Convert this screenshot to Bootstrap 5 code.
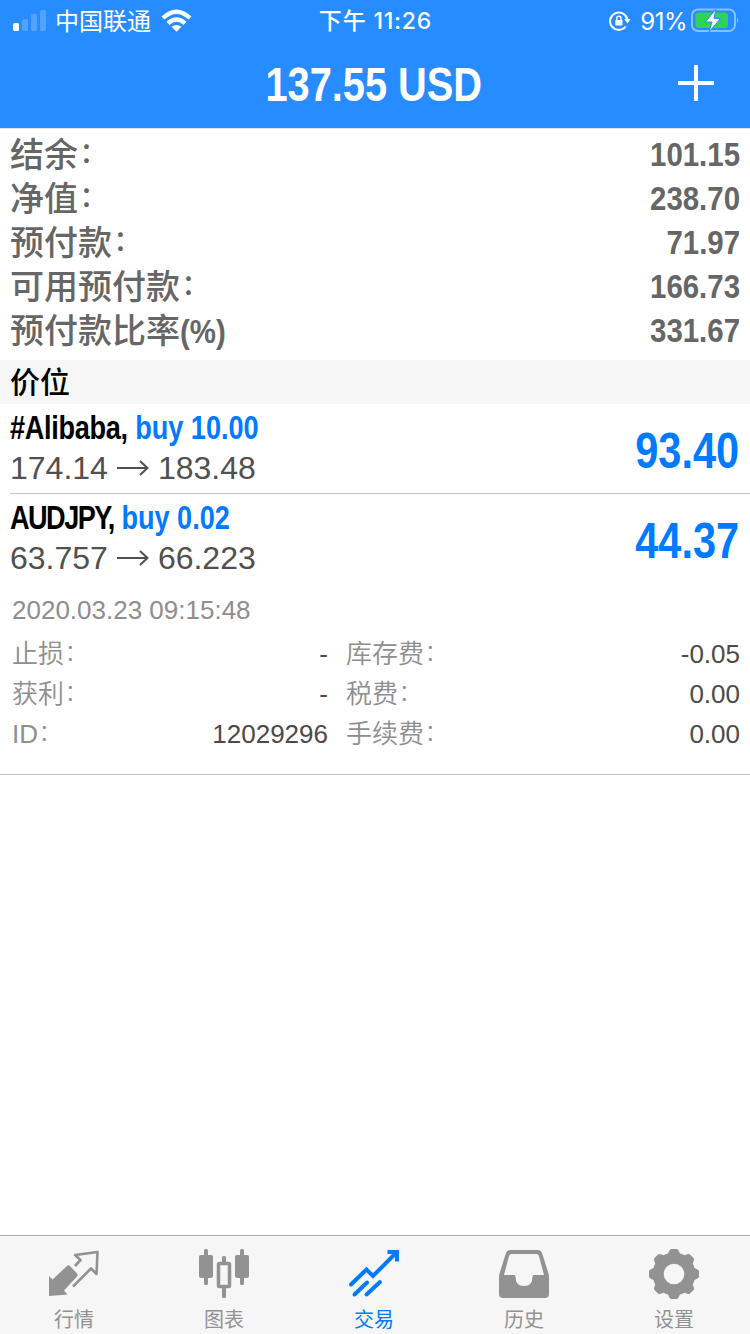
<!DOCTYPE html>
<html lang="zh-CN">
<head>
    <meta charset="UTF-8">
    <meta name="viewport" content="width=device-width, initial-scale=1.0">
    <title>交易</title>
    <link rel="stylesheet" href="https://cdn.jsdelivr.net/npm/bootstrap@5.3.0/dist/css/bootstrap.min.css">
    <style>
        body { font-family: "Liberation Sans", "Noto Sans CJK SC", sans-serif; color: #000; }
        svg { display: block; flex: none; }
        /* condensed bold: Arial widths squeezed horizontally */
        .cond { display: inline-block; font-weight: 700; white-space: nowrap; transform: scaleX(.865); transform-origin: right center; }
        .cond.from-left { transform-origin: left center; }
        /* slightly smaller colon, raised to the middle of the characters */
        .colon { font-size: .82em; line-height: 1; vertical-align: .14em; margin-left: .05em; }
        .topbar { height: 128px; background: #278cff; color: #fff; }
        .status { height: 41px; font-family: Inter, "Noto Sans CJK SC", sans-serif; font-size: 24px; line-height: 41px; padding: 0 11px 0 12px; }
        .status > div { flex: 1 1 0; }
        .carrier { margin-left: 8px; padding-top: 1px; }
        .wifi { margin-left: 10px; }
        .clock { font-weight: 500; font-size: 23px; letter-spacing: .8px; padding-top: 1px; }
        .pct { letter-spacing: -.5px; padding-top: 1px; margin: 0 4px 0 9px; }
        .title-row { height: 87px; padding: 0 36px; }
        .plus { margin-bottom: 3px; }
        .cond.total { font-size: 48px; line-height: 87px; transform: translateX(-1px) scaleX(.828); transform-origin: center; }
        .summary { height: 232px; padding: 4px 10px 0; color: #666; border-top: 1px solid #e4e4e4; }
        .sum-line { height: 44px; font-size: 34px; line-height: 44px; }
        .sum-line > .cond { line-height: 42px; }
        .sum-label { font-weight: 500; }
        .section-head { height: 44px; line-height: 46px; padding: 0 10px; font-size: 30px; font-weight: 500; background: #f6f6f6; }
        .position { height: 90px; padding-right: 11px; margin-left: 10px; }
        .position.ruled { border-bottom: 1px solid #c4c4c6; }
        .cond.symbol { display: block; font-size: 34px; line-height: 40px; padding: 3px 0 1px; transform: scaleX(.797); }
        .name-mixed { letter-spacing: -.4px; }
        .name-caps { letter-spacing: -1.9px; }
        .blue { color: #007aff; }
        .prices { font-size: 32px; line-height: 40px; color: #505050; }
        .cond.profit { font-size: 50px; line-height: 90px; padding-top: 2px; transform: scaleX(.83); }
        .details { height: 191px; border-bottom: 1px solid #c4c4c6; color: #8e8e8e; font-size: 26px; }
        .stamp { line-height: 40px; padding: 6px 12px 4px; }
        .detail-line { height: 40px; line-height: 40px; padding: 0 10px 0 12px; }
        .cell-left { width: 316px; margin-right: 18px; }
        .details .num { color: #4a4a4a; }
        .cjk { font-weight: 350; }
        .tabs { height: 99px; background: #f6f6f6; border-top: 1px solid #acacac; color: #929292; font-size: 20px; }
        .tab-item { width: 150px; padding: 13px 2px 0 0; line-height: 30px; }
        .tab-item svg { margin-bottom: 6px; }
    </style>
</head>
<body class="bg-white">
    <div class="d-flex flex-column vh-100 overflow-hidden">
        <header class="topbar">
            <div class="status d-flex">
                <div class="d-flex align-items-center">
                    <svg width="35" height="22" viewBox="0 0 35 22" fill="#fff">
                        <rect x="1" y="13" width="6" height="8" rx="1.5"/>
                        <g opacity=".2">
                            <rect x="10" y="9" width="6" height="12" rx="1.5"/>
                            <rect x="19" y="4" width="6" height="17" rx="1.5"/>
                            <rect x="28" y="0" width="6" height="21" rx="1.5"/>
                        </g>
                    </svg>
                    <span class="carrier">中国联通</span>
                    <svg class="wifi" width="31" height="23" viewBox="0 0 31 23">
                        <g fill="none" stroke="#fff" stroke-width="4.400">
                            <path d="M2 9Q15.500-3.500 29 9"/>
                            <path d="M7 14.300Q15.500 6.700 24 14.300"/>
                        </g>
                        <path d="M10.500 17.800q5-3.800 10 0L15.500 22.800z" fill="#fff"/>
                    </svg>
                </div>
                <div class="clock text-center">下午 11:26</div>
                <div class="d-flex align-items-center justify-content-end">
                    <svg width="22" height="22" viewBox="0 0 22 22">
                        <path d="M18.300 9.500A8.700 8.700 0 1 0 16.700 16.500" fill="none" stroke="#fff" stroke-width="2"/>
                        <path d="M15.300 9h6.400l-3.200 4.500z" fill="#fff"/>
                        <rect x="6.300" y="10" width="7.200" height="5.500" rx=".8" fill="#fff"/>
                        <path d="M7.800 10.500V8.300a2.100 2.100 0 0 1 4.200 0V10.500" fill="none" stroke="#fff" stroke-width="1.400"/>
                    </svg>
                    <span class="pct">91%</span>
                    <svg width="48" height="26" viewBox="0 0 48 26">
                        <rect x="1" y="1.500" width="43" height="21.500" rx="6" fill="none" stroke="#fff" stroke-opacity=".45" stroke-width="2"/>
                        <rect x="4.500" y="4.500" width="32.500" height="15.500" rx="3" fill="#30d158"/>
                        <path d="M46 9q2.500 3.300 0 6.600z" fill="#fff" fill-opacity=".45"/>
                        <path d="M25 1L14.500 14h6.500L18 24 29.500 10.500h-6.500z" fill="#fff" stroke="#278cff" stroke-width="1"/>
                    </svg>
                </div>
            </div>
            <div class="title-row d-flex justify-content-between align-items-center">
                <svg width="36" height="36"></svg>
                <span class="cond total">137.55 USD</span>
                <svg class="plus" width="36" height="36" viewBox="0 0 36 36" stroke="#fff" stroke-width="4"><path d="M18 0v36M0 18h36"/></svg>
            </div>
        </header>

        <section class="summary">
            <div class="sum-line d-flex justify-content-between"><span class="sum-label">结余<span class="colon">：</span></span><span class="cond">101.15</span></div>
            <div class="sum-line d-flex justify-content-between"><span class="sum-label">净值<span class="colon">：</span></span><span class="cond">238.70</span></div>
            <div class="sum-line d-flex justify-content-between"><span class="sum-label">预付款<span class="colon">：</span></span><span class="cond">71.97</span></div>
            <div class="sum-line d-flex justify-content-between"><span class="sum-label">可用预付款<span class="colon">：</span></span><span class="cond">166.73</span></div>
            <div class="sum-line d-flex justify-content-between"><span class="sum-label">预付款比率<span class="cond from-left">(%)</span></span><span class="cond">331.67</span></div>
        </section>

        <div class="section-head">价位</div>

        <main class="flex-grow-1">
            <div class="position ruled d-flex justify-content-between">
                <div>
                    <div class="cond from-left symbol"><span class="name-mixed">#Alibaba,</span> <span class="blue">buy 10.00</span></div>
                    <div class="prices d-flex align-items-center">174.14<svg class="mx-2" width="34" height="20" viewBox="0 0 34 20" fill="none" stroke="#505050" stroke-width="2"><path d="M1 10h30M24 3l7.500 7L24 17"/></svg>183.48</div>
                </div>
                <div class="cond profit blue">93.40</div>
            </div>
            <div class="position d-flex justify-content-between">
                <div>
                    <div class="cond from-left symbol"><span class="name-caps">AUDJPY,</span> <span class="blue">buy 0.02</span></div>
                    <div class="prices d-flex align-items-center">63.757<svg class="mx-2" width="34" height="20" viewBox="0 0 34 20" fill="none" stroke="#505050" stroke-width="2"><path d="M1 10h30M24 3l7.500 7L24 17"/></svg>66.223</div>
                </div>
                <div class="cond profit blue">44.37</div>
            </div>
            <div class="details">
                <div class="stamp">2020.03.23 09:15:48</div>
                <div class="detail-line d-flex">
                    <div class="cell-left d-flex justify-content-between"><span class="cjk">止损<span class="colon">：</span></span><span class="num">-</span></div>
                    <div class="flex-grow-1 d-flex justify-content-between"><span class="cjk">库存费<span class="colon">：</span></span><span class="num">-0.05</span></div>
                </div>
                <div class="detail-line d-flex">
                    <div class="cell-left d-flex justify-content-between"><span class="cjk">获利<span class="colon">：</span></span><span class="num">-</span></div>
                    <div class="flex-grow-1 d-flex justify-content-between"><span class="cjk">税费<span class="colon">：</span></span><span class="num">0.00</span></div>
                </div>
                <div class="detail-line d-flex">
                    <div class="cell-left d-flex justify-content-between"><span class="cjk">ID<span class="colon">：</span></span><span class="num">12029296</span></div>
                    <div class="flex-grow-1 d-flex justify-content-between"><span class="cjk">手续费<span class="colon">：</span></span><span class="num">0.00</span></div>
                </div>
            </div>
        </main>

        <nav class="tabs d-flex">
            <div class="tab-item d-flex flex-column align-items-center">
                <svg width="50" height="50" viewBox="0 0 50 50">
                    <path d="M0 27L3.500 30.500 18 17Q19.500 15.500 21 17L28 24.500Q29.500 26 28 27.500L15 41.500 18.500 45.500 0 47z" fill="#929292"/>
                    <path d="M26 17l5.500-6L26 6 48.500 3 47.500 25 42 19.500 24 37.500" fill="none" stroke="#929292" stroke-width="2.600" stroke-linejoin="round"/>
                </svg>
                <span>行情</span>
            </div>
            <div class="tab-item d-flex flex-column align-items-center">
                <svg width="50" height="50" viewBox="0 0 50 50" fill="#929292">
                    <rect x="5" y="0" width="4" height="36" rx="1.500"/>
                    <rect x="0" y="6" width="14" height="23" rx="2"/>
                    <rect x="41" y="0" width="4" height="36" rx="1.500"/>
                    <rect x="36" y="6" width="14" height="23" rx="2"/>
                    <rect x="23" y="7" width="4" height="42" rx="1.500"/>
                    <rect x="19.500" y="14.500" width="11" height="23" rx="1" fill="#f6f6f6" stroke="#929292" stroke-width="3.500"/>
                </svg>
                <span>图表</span>
            </div>
            <div class="tab-item blue d-flex flex-column align-items-center">
                <svg width="50" height="50" viewBox="0 0 50 50" fill="none" stroke="#007aff" stroke-width="4" stroke-linecap="round">
                    <path d="M2 35.500L17.500 20.500 24 27 46.500 4.500"/>
                    <path d="M38.500 3H48v9.500" stroke-linecap="butt"/>
                    <path d="M5.500 45.500L18 33.500M17.500 45.500L31 33"/>
                </svg>
                <span>交易</span>
            </div>
            <div class="tab-item d-flex flex-column align-items-center">
                <svg width="50" height="50" viewBox="0 0 50 50">
                    <path d="M11 1H39Q42 1 43 4L49 23Q50 25 50 28V45Q50 49 46 49H4Q0 49 0 45V28Q0 25 1 23L7 4Q8 1 11 1z" fill="#929292"/>
                    <path d="M12.500 5H37.500Q39.500 5 40 7L45 26H35Q33.500 26 33.500 28Q33.500 37 25 37Q16.500 37 16.500 28Q16.500 26 15 26H5L10 7Q10.500 5 12.500 5z" fill="#f6f6f6"/>
                </svg>
                <span>历史</span>
            </div>
            <div class="tab-item d-flex flex-column align-items-center">
                <svg width="50" height="50" viewBox="0 0 50 50">
                    <g fill="#929292">
                        <circle cx="25" cy="25" r="20.500"/>
                        <path id="teeth" d="M15.500 6L19 4.500 20.500 1.500Q21 0 22.500 0h5Q29 0 29.500 1.500L31 4.500 34.500 6V44L31 45.500 29.500 48.500Q29 50 27.500 50h-5Q21 50 20.500 48.500L19 45.500 15.500 44z"/>
                        <use href="#teeth" transform="rotate(45 25 25)"/>
                        <use href="#teeth" transform="rotate(90 25 25)"/>
                        <use href="#teeth" transform="rotate(135 25 25)"/>
                    </g>
                    <circle cx="25" cy="25" r="10.300" fill="#f6f6f6"/>
                </svg>
                <span>设置</span>
            </div>
        </nav>
    </div>
    <script src="https://cdn.jsdelivr.net/npm/bootstrap@5.3.0/dist/js/bootstrap.bundle.min.js"></script>
</body>
</html>
